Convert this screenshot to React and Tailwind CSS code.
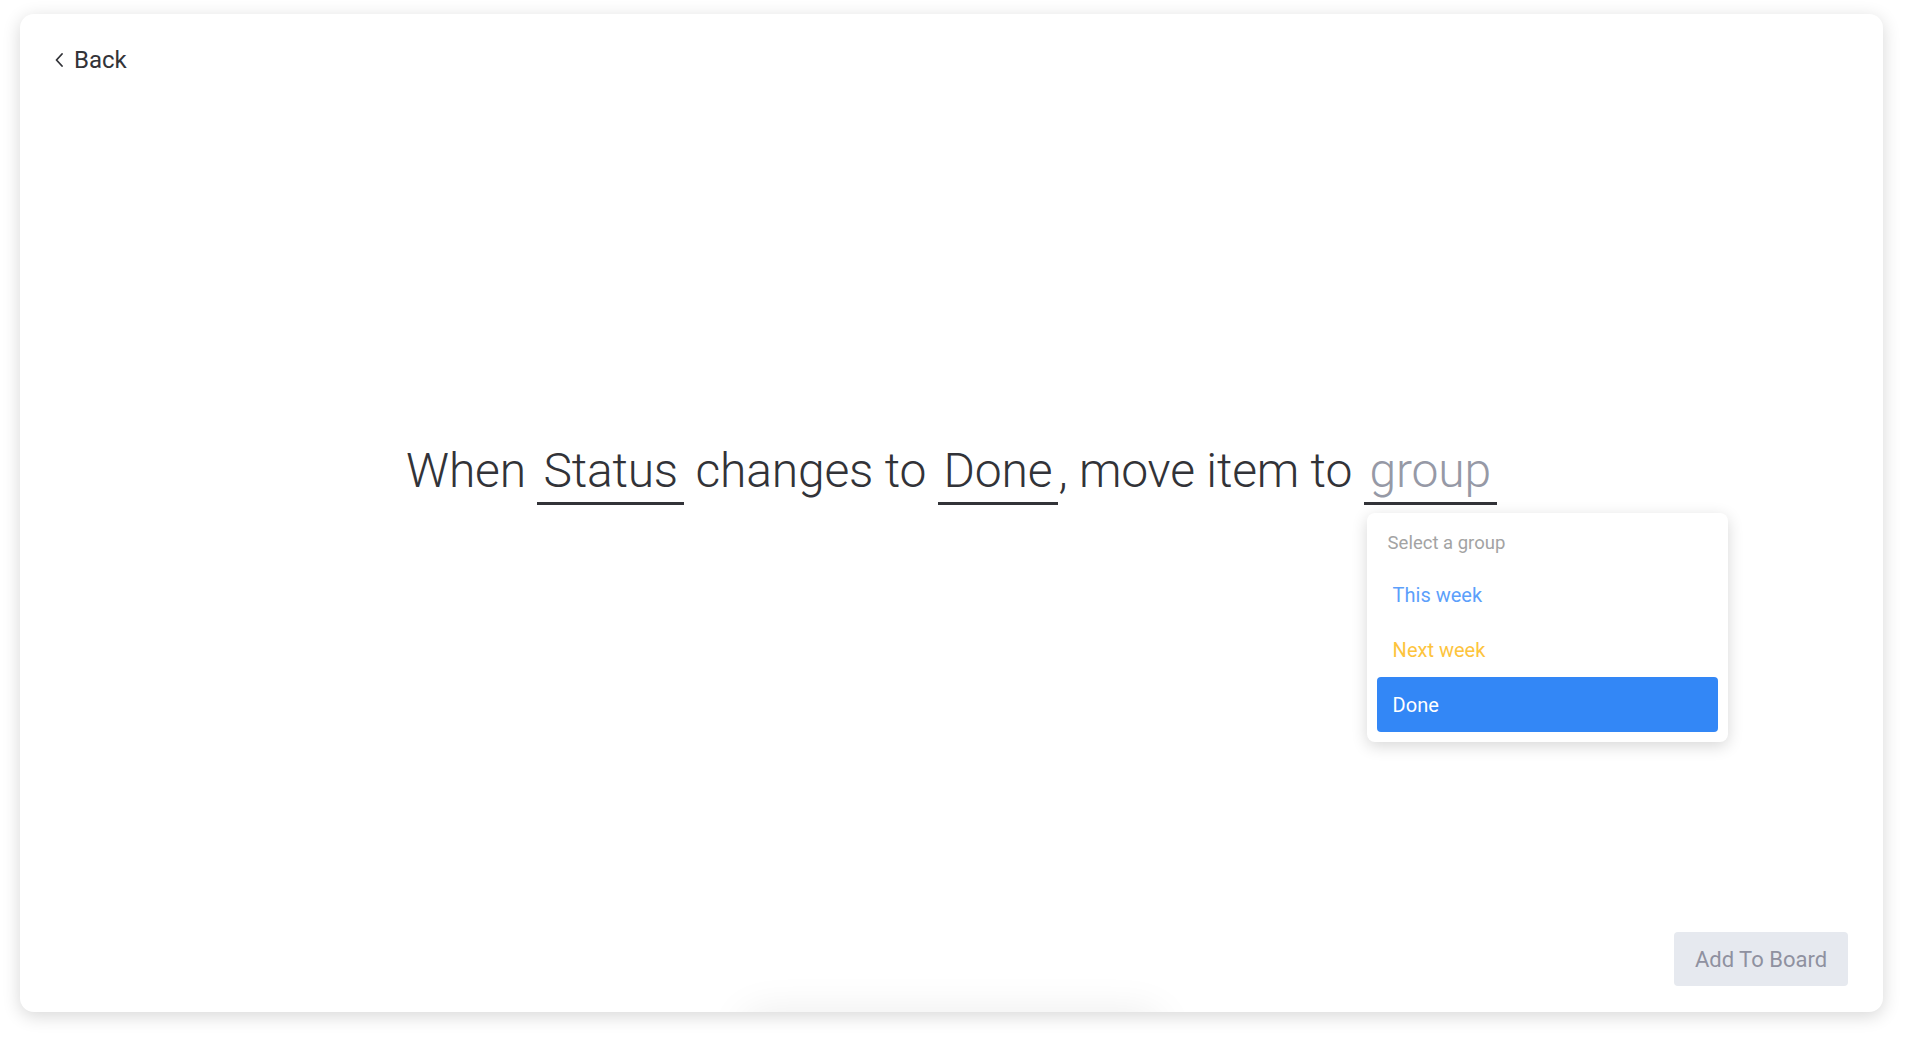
const groups = [
    { name: 'This week', color: 'text-[#5c9ffb]' },
    { name: 'Next week', color: 'text-[#fdc43d]' },
    { name: 'Done', active: true },
];

function Blank({ children, muted }) {
    return (
        <span className={`inline-block border-b-[3px] border-[#323338] px-[6px] leading-[62px] ${muted ? 'text-[#9699a6]' : ''}`}>
            {children}
        </span>
    );
}

export default function App() {
    return (
        <div className="h-screen bg-white pt-[14px] pl-[20px] pr-[22px] pb-[26px] font-['Roboto',sans-serif] text-[#323338]">
            <div className="relative h-full rounded-[14px] bg-white shadow-[0_4px_18px_rgba(0,0,0,0.16)] flex flex-col overflow-hidden">
                {/* Header */}
                <div className="pl-[34px] pt-[31px] flex items-center gap-[10px] text-[24px] leading-[30px]">
                    <svg width="10" height="14" viewBox="0 0 10 14" fill="none">
                        <path d="M8 1 L2.5 7 L8 13" stroke="#323338" strokeWidth="1.8" strokeLinecap="round" strokeLinejoin="round" />
                    </svg>
                    <span>Back</span>
                </div>

                {/* Sentence */}
                <div className="mt-[365px] flex justify-center">
                    <div className="text-[48px] leading-[62px] font-light tracking-[-0.2px] whitespace-nowrap">
                        When <Blank>Status</Blank> changes to <Blank>Done</Blank>, move item to{' '}
                        <span className="relative inline-block">
                            <Blank muted>group</Blank>
                            <div className="absolute left-[3px] top-full mt-[8px] w-[361px] rounded-[8px] bg-white shadow-[0_4px_16px_rgba(0,0,0,0.16)] px-[10px] pb-[10px] font-normal tracking-normal leading-normal">
                                <div className="h-[54px] pt-[8px] flex items-center pl-[11px] text-[18.5px] text-[#a3a3a3]">Select a group</div>
                                {groups.map(g => (
                                    <div
                                        key={g.name}
                                        className={`h-[55px] flex items-center pl-[16px] rounded-[4px] text-[20px] ${g.active ? 'bg-[#3387f6] text-white' : g.color}`}
                                    >
                                        {g.name}
                                    </div>
                                ))}
                            </div>
                        </span>
                    </div>
                </div>

                {/* Footer */}
                <div className="mt-auto flex justify-end pr-[35px] pb-[26px]">
                    <button className="h-[54px] w-[174px] rounded-[4px] bg-[#e6e9ef] text-[22px] text-[#8f91a0]">
                        Add To Board
                    </button>
                </div>

                <div className="absolute left-1/2 -translate-x-1/2 bottom-[-40px] w-[420px] h-[40px] rounded-full shadow-[0_0_40px_rgba(0,0,0,0.08)]" />
            </div>
        </div>
    );
}
